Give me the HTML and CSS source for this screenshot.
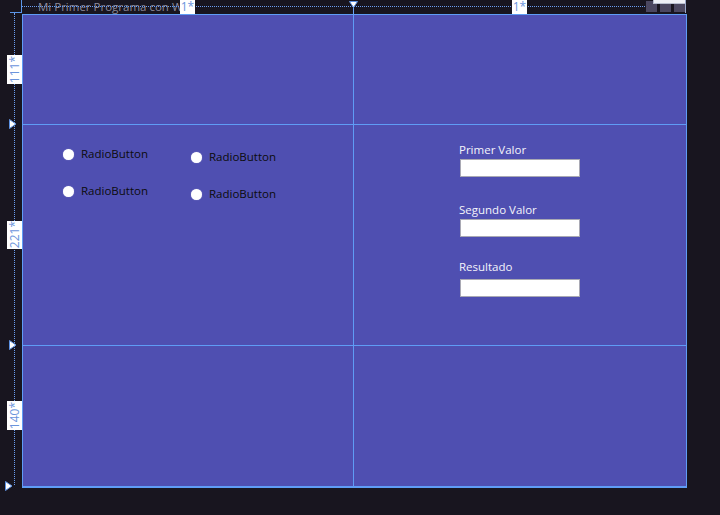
FILE: index.html
```html
<!DOCTYPE html>
<html lang="es">
<head>
<meta charset="utf-8">
<title>Mi Primer Programa con WPF</title>
<link rel="stylesheet" href="styles.css">
</head>
<body>
<div class="designer">
  <div class="title">Mi Primer Programa con WPF</div>

  <div class="ruler-top"></div>
  <div class="ruler-left"></div>
  <div class="corner-h"></div>
  <div class="corner-v"></div>

  <div class="col-tag tag-a">1*</div>
  <div class="col-tag tag-b">1*</div>

  <svg class="col-marker" width="9" height="14" viewBox="0 0 9 14">
    <path d="M0.5 0.5 H8.5 L4.5 6.5 Z" fill="#ffffff" stroke="#5b8fe0" stroke-width="1"/>
    <path d="M4.5 6.5 V14" stroke="#6aa2f5" stroke-width="1"/>
  </svg>

  <div class="row-tag tag-r1"><span>111*</span></div>
  <div class="row-tag tag-r2"><span>221*</span></div>
  <div class="row-tag tag-r3"><span>140*</span></div>

  <svg class="row-marker m1" width="8" height="10" viewBox="0 0 8 10"><path d="M0.5 0.5 L7 5 L0.5 9.5 Z" fill="#fff" stroke="#5b8fe0"/></svg>
  <svg class="row-marker m2" width="8" height="10" viewBox="0 0 8 10"><path d="M0.5 0.5 L7 5 L0.5 9.5 Z" fill="#fff" stroke="#5b8fe0"/></svg>
  <svg class="row-marker m3" width="8" height="10" viewBox="0 0 8 10"><path d="M0.5 0.5 L7 5 L0.5 9.5 Z" fill="#fff" stroke="#5b8fe0"/></svg>

  <div class="win-tools">
    <span class="tool"></span><span class="tool"></span><span class="tool"></span>
  </div>
  <div class="win-tip"></div>
  <div class="win-edge"></div>

  <div class="window">
    <div class="cell"></div>
    <div class="cell"></div>
    <div class="cell radios">
      <div class="radio-col">
        <label class="radio"><span class="dot"></span>RadioButton</label>
        <label class="radio"><span class="dot"></span>RadioButton</label>
      </div>
      <div class="radio-col second">
        <label class="radio"><span class="dot"></span>RadioButton</label>
        <label class="radio"><span class="dot"></span>RadioButton</label>
      </div>
    </div>
    <div class="cell fields">
      <div class="field f1">
        <div class="lbl">Primer Valor</div>
        <div class="box"></div>
      </div>
      <div class="field f2">
        <div class="lbl">Segundo Valor</div>
        <div class="box"></div>
      </div>
      <div class="field f3">
        <div class="lbl">Resultado</div>
        <div class="box"></div>
      </div>
    </div>
    <div class="cell"></div>
    <div class="cell"></div>
  </div>
</div>
</body>
</html>
```

FILE: styles.css
```css
html, body {
  margin: 0;
  padding: 0;
  background: #18151f;
}

body {
  width: 720px;
  height: 515px;
  overflow: hidden;
  font-family: "Open Sans", "Noto Sans", sans-serif;
}

.designer {
  position: relative;
  width: 720px;
  height: 515px;
  padding: 14px 0 0 22px;
  box-sizing: border-box;
}

.title {
  position: absolute;
  left: 38px;
  top: 0;
  width: 142px;
  height: 14px;
  overflow: hidden;
  font-size: 11.5px;
  line-height: 14px;
  color: #8d8a9c;
  white-space: nowrap;
}

.ruler-top {
  position: absolute;
  left: 22px;
  top: 6px;
  width: 631px;
  border-top: 1px dotted #6a9df0;
}

.ruler-left {
  position: absolute;
  left: 14px;
  top: 13px;
  height: 472px;
  border-left: 1px dotted #6a9df0;
}

.corner-h {
  position: absolute;
  left: 10px;
  top: 12px;
  width: 12px;
  height: 1px;
  background: #5b95e8;
}

.corner-v {
  position: absolute;
  left: 21px;
  top: 0;
  width: 1px;
  height: 13px;
  background: #5b95e8;
}

.col-tag {
  position: absolute;
  top: 0;
  height: 14px;
  width: 15px;
  background: #ffffff;
  color: #6b94dc;
  font-size: 12px;
  line-height: 13px;
  text-align: center;
}

.tag-a { left: 180px; }
.tag-b { left: 512px; }

.col-marker {
  position: absolute;
  left: 349px;
  top: 1px;
}

.row-tag {
  position: absolute;
  left: 7px;
  width: 15px;
  background: #ffffff;
  color: #6b94dc;
  font-size: 12px;
  display: flex;
  align-items: center;
  justify-content: center;
}

.row-tag span {
  writing-mode: vertical-rl;
  transform: rotate(180deg);
  line-height: 15px;
}

.tag-r1 { top: 55px; height: 29px; }
.tag-r2 { top: 221px; height: 28px; }
.tag-r3 { top: 401px; height: 29px; }

.row-marker {
  position: absolute;
  left: 9px;
}

.m1 { top: 119px; }
.m2 { top: 340px; }
.m3 { top: 481px; left: 5px; }

.win-tools {
  position: absolute;
  left: 646px;
  top: 1px;
  display: flex;
  gap: 3px;
}

.tool {
  width: 11px;
  height: 11px;
  background: #4b4760;
}

.win-tip {
  position: absolute;
  left: 653px;
  top: -1px;
  width: 31px;
  height: 3px;
  background: #eef0f6;
  border: 1px solid #b9bfd0;
}

.win-edge {
  position: absolute;
  left: 685px;
  top: 0;
  width: 1px;
  height: 13px;
  background: #9aa6c8;
}

.window {
  width: 665px;
  height: 474px;
  box-sizing: border-box;
  border: 1px solid #5f9cf5;
  border-right-width: 2px;
  border-bottom-width: 2px;
  background: #5f9cf5;
  display: grid;
  grid-template-columns: 330px 332px;
  grid-template-rows: 109px 220px 140px;
  gap: 1px;
}

.cell {
  background: #4f4fb1;
}

.radios {
  display: flex;
  padding: 21px 0 0 40px;
  font-size: 11.5px;
  color: #0c0c0c;
}

.radio-col {
  display: flex;
  flex-direction: column;
  gap: 21px;
  width: 128px;
}

.radio-col.second {
  padding-top: 3px;
}

.radio {
  display: flex;
  align-items: center;
  gap: 7px;
  height: 16px;
  line-height: 16px;
  white-space: nowrap;
}

.dot {
  width: 11px;
  height: 11px;
  border-radius: 50%;
  background: #ffffff;
  box-shadow: 0 0 1px rgba(255,255,255,0.6);
}

.fields {
  display: flex;
  flex-direction: column;
  padding: 17px 0 0 105px;
}

.field {
  display: flex;
  flex-direction: column;
}

.lbl {
  font-size: 11.5px;
  line-height: 15px;
  color: #f4f4fb;
  white-space: nowrap;
}

.box {
  width: 118px;
  height: 16px;
  margin: 2px 0 0 1px;
  background: #ffffff;
  border: 1px solid #a9a9b4;
}

.f2 { margin-top: 25px; }
.f3 { margin-top: 22px; }
.f3 .box { margin-top: 5px; }
```
